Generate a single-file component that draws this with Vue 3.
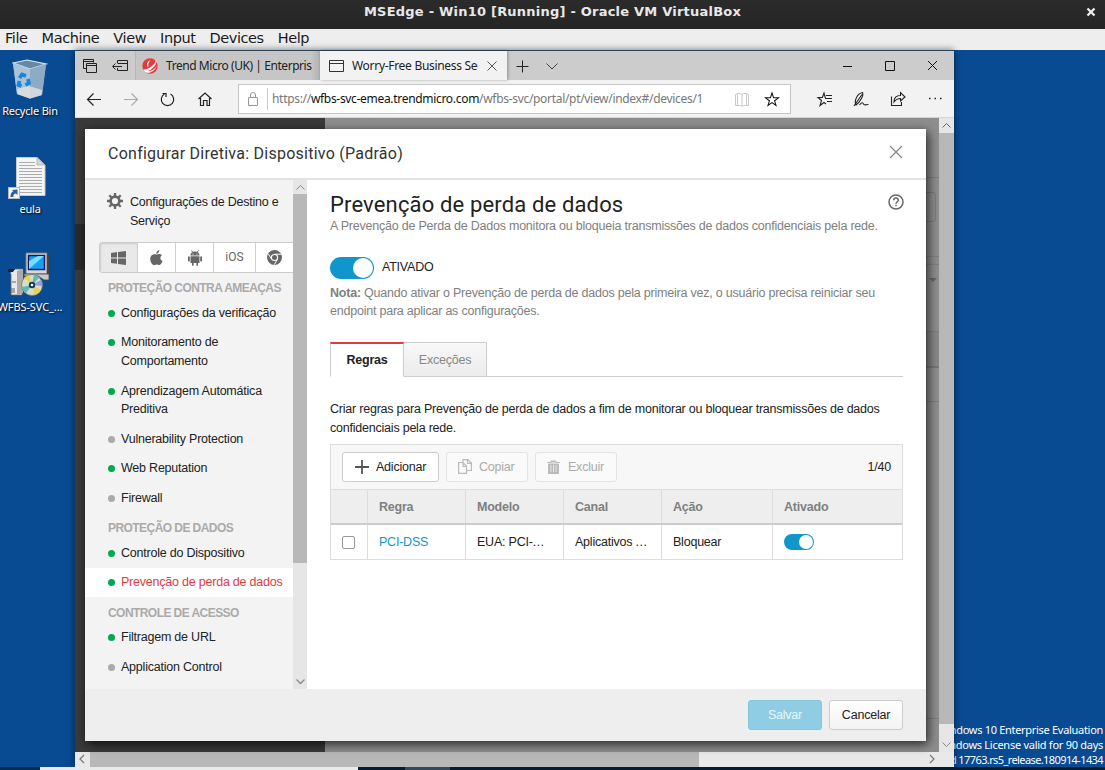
<script setup>
const menus = ['File', 'Machine', 'View', 'Input', 'Devices', 'Help']
const sections = [
  {
    title: 'PROTEÇÃO CONTRA AMEAÇAS',
    items: [
      { lines: ['Configurações da verificação'], on: true },
      { lines: ['Monitoramento de', 'Comportamento'], on: true },
      { lines: ['Aprendizagem Automática', 'Preditiva'], on: true },
      { lines: ['Vulnerability Protection'], on: false },
      { lines: ['Web Reputation'], on: true },
      { lines: ['Firewall'], on: false },
    ],
  },
  {
    title: 'PROTEÇÃO DE DADOS',
    items: [
      { lines: ['Controle do Dispositivo'], on: true },
      { lines: ['Prevenção de perda de dados'], on: true, active: true },
    ],
  },
  {
    title: 'CONTROLE DE ACESSO',
    items: [
      { lines: ['Filtragem de URL'], on: true },
      { lines: ['Application Control'], on: false },
    ],
  },
]
const heads = ['', 'Regra', 'Modelo', 'Canal', 'Ação', 'Ativado']
</script>

<template>
  <div class="vm">
    <header class="titlebar">
      <span class="vmtitle">MSEdge - Win10 [Running] - Oracle VM VirtualBox</span>
      <svg class="vmclose" width="10" height="10" viewBox="0 0 10 10"><path d="M1.500 1.500L8.500 8.500M8.500 1.500L1.500 8.500" stroke="#eee" stroke-width="2.300" /></svg>
    </header>
    <nav class="menubar">
      <span v-for="m in menus" :key="m">{{ m }}</span>
    </nav>

    <div class="desktop">
      <div class="shortcut bin">
        <svg width="36" height="40" viewBox="0 0 36 40">
          <path d="M1 4L15 1L34 5L30 36L18 39.500L5 35Z" fill="#9db9d2" />
          <path d="M1 4L15 1L34 5L18 10Z" fill="#6688a8" stroke="#dce7ef" stroke-width="1.200" />
          <path d="M1 4L18 10V39.500L5 35Z" fill="#a9c2d6" />
          <path d="M18 10L34 5L30 36L18 39.500Z" fill="#8faac4" />
          <path d="M5 30L17 27L30 31L29.500 36L18 39.500L5.500 35Z" fill="#dedfe0" opacity=".85" />
          <g fill="none" stroke="#1684e0" stroke-width="3.600"><path d="M7.500 19L10 15.500L14 17M16 20L17 24L13.500 26M9.500 27L6.500 26L7.500 22" /></g>
        </svg>
        <span class="lbl l1">Recycle Bin</span>
      </div>
      <div class="shortcut eula">
        <svg width="38" height="42" viewBox="0 0 38 42">
          <path d="M8.500 .5H29L37 8V38.500H8.500Z" fill="#f5f5f3" stroke="#c9c9c9" />
          <path d="M29 .5V8H37Z" fill="#d2d5d8" stroke="#a8a8a8" stroke-width=".7" />
          <path d="M11 5.500H27M11 8.500H27M11 11.500H34M11 14.500H34M11 17.500H34M11 20.500H34M11 23.500H34M11 26.500H34M11 29.500H34M11 32.500H34M11 35.500H34" stroke="#a9adb0" />
          <rect x=".5" y="30.500" width="11" height="11" fill="#f4f4f4" stroke="#b9b9b9" />
          <path d="M2.500 40C2.500 36.500 3.500 35 5.300 34.500L4 33L9.500 32.500L9.500 38L7.800 36.500C5.500 37 5 38 5.500 40Z" fill="#2c5fa8" />
        </svg>
        <span class="lbl l2">eula</span>
      </div>
      <div class="shortcut wfbs">
        <svg width="44" height="44" viewBox="0 0 44 44">
          <path d="M18 1H39V22H18Z" fill="#d8d8d6" stroke="#777" />
          <path d="M39 1L41 3V23H39Z" fill="#444" />
          <rect x="20.500" y="3.500" width="16" height="14" fill="#1b9df0" stroke="#101a6c" stroke-width="1.500" />
          <path d="M21 17V9L30 4H36Z" fill="#72e0fb" />
          <path d="M16 22H41V28H36L30 24H16Z" fill="#c9c9c6" stroke="#444" stroke-width=".8" />
          <path d="M2 21L7 17H15L14 43H3V22Z" fill="#e9e9e7" stroke="#666" stroke-width=".8" />
          <path d="M0 17H7L5 20H0Z" fill="#222" />
          <path d="M9 19L15 17V41L9 43Z" fill="#aaa" />
          <path d="M4 36V41M6 36V41M4 30H8" stroke="#666" />
          <circle cx="24" cy="33" r="10.500" fill="#dbdcc8" stroke="#777" stroke-width=".8" />
          <path d="M24 33L16 26A10.500 10.500 0 0 1 21 23ZM24 33L33 38A10.500 10.500 0 0 1 27 43Z" fill="#e6d44a" />
          <path d="M24 33L26 23A10.500 10.500 0 0 1 31 26ZM24 33L14 35A10.500 10.500 0 0 0 18 41Z" fill="#58bdb4" />
          <path d="M24 33L33 28A10 10 0 0 1 34 34Z" fill="#8e9fe0" />
          <circle cx="24" cy="33" r="3.200" fill="#16355e" /><circle cx="24" cy="33" r="1.300" fill="#fff" />
        </svg>
        <span class="lbl l3">WFBS-SVC_...</span>
      </div>

      <div class="watermark">
        <span class="w1">Windows 10 Enterprise Evaluation</span>
        <span class="w2">Windows License valid for 90 days</span>
        <span class="w3">Build 17763.rs5_release.180914-1434</span>
      </div>

      <section class="browser">
        <div class="tabs">
          <div class="tabtools">
            <svg width="60" height="29" viewBox="0 0 60 29" fill="none" stroke="#222">
              <path d="M8.500 17.500V8.500H18.500V11.500M8.500 10.500H18M11.500 12.500H21.500V21.500H11.500ZM11.500 14.500H21.500M8.500 17.500H11" />
              <path d="M42.500 12V9.500H52.500V19.500H42.500V17M42.500 12.500H52.500M38 15.500H47M40.500 12.500L37.500 15.500L40.500 18.500" />
            </svg>
          </div>
          <div class="tab idle">
            <svg width="16" height="16" viewBox="0 0 16 16"><circle cx="8" cy="8" r="7.700" fill="#e8383d" /><path d="M1.500 11.500C5 12 13 8 14 1.500C16 6 10 11.500 6 13C9 13.500 13 11 15 7.500C13 14 5 17 2 13Z" fill="#fff" /><path d="M8.500 2C5 3.500 4 7 6.500 9.500C5.800 7 6.500 4 8.500 2Z" fill="#fff" /></svg>
            <span class="t1">Trend Micro (UK) | Enterpris</span>
          </div>
          <div class="tab open">
            <svg width="15" height="12" viewBox="0 0 15 12" fill="none" stroke="#333"><path d="M.5.500H14.500V11.500H.5ZM.5 3.500H14.500" /></svg>
            <span class="t2">Worry-Free Business Sec</span>
            <svg class="tx" width="10" height="10" viewBox="0 0 10 10"><path d="M.5.500L9.500 9.500M9.500.500L.5 9.500" stroke="#555" /></svg>
          </div>
          <svg class="tabextra" width="52" height="29" viewBox="0 0 52 29" fill="none" stroke="#222"><path d="M9.500 15.500H21.500M15.500 9.500V21.500" /><path d="M39.500 12.500L45 18L50.500 12.500" stroke="#444" /></svg>
          <svg class="winctl" width="110" height="29" viewBox="0 0 110 29" fill="none" stroke="#111"><path d="M4 15.500H13" /><path d="M46.500 10.500H55.500V19.500H46.500Z" /><path d="M89 10L98 19M98 10L89 19" /></svg>
        </div>

        <div class="toolbar">
          <svg class="nav" width="163" height="38" viewBox="0 0 163 38" fill="none" stroke="#222" stroke-width="1.200">
            <path d="M13 19.500H26M18.500 13.500L12.500 19.500L18.500 25.500" />
            <path d="M49 19.500H62M56.500 13.500L62.500 19.500L56.500 25.500" stroke="#aaa" />
            <path d="M89.500 14A6.200 6.200 0 1 0 95.500 14M87.500 13.500H91V17" />
            <path d="M123.500 19L130 13L136.500 19M125.500 18V25.500H128.500V20.500H132V25.500H134.500V18" />
          </svg>
          <div class="address">
            <svg width="29" height="28" viewBox="0 0 29 28" fill="none" stroke="#999"><path d="M9.500 12.500H18.500V20.500H9.500ZM11.500 12V10A2.500 2.500 0 0 1 16.500 10V12" /><path d="M28.500 3V25" stroke="#ccc" /></svg>
            <span class="url">https://<b>wfbs-svc-emea.trendmicro.com</b>/wfbs-svc/portal/pt/view/index#/devices/1</span>
            <svg class="fav" width="50" height="28" viewBox="0 0 50 28" fill="none"><path d="M1.500 9.500L3.500 8.500H6.500L8 9.500L9.500 8.500H12.500L14.500 9.500V20.500H9.500L8 21.500L6.500 20.500H1.500ZM8 9.500V21M3.500 9V20M12.500 9V20" stroke="#c4c4c4" stroke-width=".9" /><path d="M38 8L39.600 12.800H44.500L40.600 15.800L42 20.500L38 17.600L34 20.500L35.400 15.800L31.500 12.800H36.400Z" stroke="#111" stroke-width="1.050" /></svg>
          </div>
          <svg class="acts" width="150" height="38" viewBox="0 0 150 38" fill="none" stroke="#222" stroke-width="1.100">
            <path d="M33.500 18.500H29.500L28 13L26.400 17.500H22L25.500 20.500L24 25.500L28 22.500L30 24M30 15.500H36M30 18.500H36M31 21.500H36" />
            <path d="M60 25C58 21 61 13.500 66.500 12.500C68 15.500 64 22 60 25ZM58 26L66 14.500M63.500 25C65.500 22 67 22.500 67.500 24C68.500 26 70.500 24 72.500 24.500" />
            <path d="M95.500 16.500V25.500H105.500V22M98 22C98 17 101 15.500 104.500 15.500V12.500L109 17L104.500 21V18.500C101 18.500 99.500 20 98 22Z" />
            <path d="M133 18.500H134.500M138.500 18.500H140M144 18.500H145.500" stroke-width="1.600" />
          </svg>
        </div>

        <div class="page">
          <div class="darkcol"><i></i></div>
          <div class="greycol">
            <span class="ln a"></span><span class="bx"></span><span class="ln b"></span><span class="ln c"></span><span class="caret"></span><span class="ln d"></span><span class="band"></span><span class="ln e"></span><span class="ln g"></span><span class="ln f"></span>
          </div>
          <div class="vscroll"><i class="cap"><svg width="15" height="15" viewBox="0 0 15 15"><path d="M3.500 9.500L7.500 5.500L11.500 9.500" fill="none" stroke="#666" /></svg></i><i class="vthumb"></i><i class="vend"><svg width="15" height="15" viewBox="0 0 15 15"><path d="M3.500 5.500L7.500 9.500L11.500 5.500" fill="none" stroke="#888" /></svg></i></div>

          <div class="modal">
            <div class="mhead">
              <span class="mtitle">Configurar Diretiva: Dispositivo (Padrão)</span>
              <svg width="14" height="14" viewBox="0 0 14 14"><path d="M1 1L13 13M13 1L1 13" stroke="#888" stroke-width="1.200" /></svg>
            </div>
            <div class="mbody">
              <aside class="side">
                <div class="cfg">
                  <svg width="16" height="16" viewBox="0 0 16 16"><circle cx="8" cy="8" r="4.400" fill="none" stroke="#666" stroke-width="2.600" /><path d="M8 0V3M8 13V16M0 8H3M13 8H16M2.300 2.300L4.500 4.500M11.500 11.500L13.700 13.700M13.700 2.300L11.500 4.500M4.500 11.500L2.300 13.700" stroke="#666" stroke-width="2.300" /></svg>
                  <div><div>Configurações de Destino e</div><div>Serviço</div></div>
                </div>
                <div class="osrow">
                  <span class="sel"><svg width="15" height="14" viewBox="0 0 15 14" fill="#666"><path d="M0 2L6 1.100V6.500H0ZM7 1L15 0V6.500H7ZM0 7.500H6V12.800L0 12ZM7 7.500H15V14L7 13Z" /></svg></span>
                  <span><svg width="13" height="16" viewBox="0 0 13 16" fill="#666"><path d="M6.500 4.600C8 4 10.500 3.200 12 5.300C9.500 7 10 10 12.600 11.100C11.500 14 10 15.500 8.500 15C7 14.300 6 14.400 4.800 15C2.500 16 0 11.500 .2 8.500C.5 5 3.500 3.500 6.500 4.600ZM6.300 3.900C6.200 2 7.600 .4 9.300 0C9.500 2 8 3.800 6.300 3.900Z" /></svg></span>
                  <span><svg width="14" height="16" viewBox="0 0 14 16" fill="#666"><path d="M2.500 5.500C2.500 2.500 4.500 1.500 7 1.500S11.500 2.500 11.500 5.500ZM2.500 6.200H11.500V13H10V15.300Q9.200 16.500 8.400 15.300V13H5.600V15.300Q4.800 16.500 4 15.300V13H2.500ZM0 6.800Q.9 5.600 1.800 6.800V11Q.9 12 0 11ZM12.200 6.800Q13.100 5.600 14 6.800V11Q13.100 12 12.200 11Z" /><path d="M3.500 .5L4.800 2.300M10.500 .5L9.200 2.300" stroke="#666" /><circle cx="5" cy="4" r=".6" fill="#fff" /><circle cx="9" cy="4" r=".6" fill="#fff" /></svg></span>
                  <span class="ios">iOS</span>
                  <span><svg width="15" height="15" viewBox="0 0 15 15"><circle cx="7.500" cy="7.500" r="7.500" fill="#666" /><circle cx="7.500" cy="7.500" r="3.600" fill="#fff" /><circle cx="7.500" cy="7.500" r="2.500" fill="#666" /><path d="M7.500 4.200H14.200M4.500 9.200L1.300 3.800M10.500 9.200L7.200 14.800" stroke="#fff" /></svg></span>
                </div>
                <template v-for="s in sections" :key="s.title">
                  <div class="sec">{{ s.title }}</div>
                  <div v-for="it in s.items" :key="it.lines[0]" class="item" :class="{ active: it.active }">
                    <i :class="{ on: it.on }"></i>
                    <div><div v-for="l in it.lines" :key="l">{{ l }}</div></div>
                  </div>
                </template>
              </aside>
              <div class="sscroll"><i class="cap"><svg width="14" height="14" viewBox="0 0 14 14"><path d="M3.500 9.500L7.500 5.500L11.500 9.500" fill="none" stroke="#888" /></svg></i><i class="sthumb"></i><i class="send"><svg width="14" height="14" viewBox="0 0 14 14"><path d="M3.500 4.500L7.500 8.500L11.500 4.500" fill="none" stroke="#888" stroke-width="1.300" /></svg></i></div>

              <main class="main">
                <div class="h1row">
                  <h1>Prevenção de perda de dados</h1>
                  <svg class="help" width="16" height="16" viewBox="0 0 16 16" fill="none" stroke="#666"><circle cx="8" cy="8" r="7" stroke-width="1.500" /><path d="M5.700 6.300C5.700 3.400 10.300 3.400 10.300 6.200C10.300 7.800 8 7.800 8 9.800M8 10.700V12.300" stroke-width="1.500" /></svg>
                </div>
                <p class="grey sub">A Prevenção de Perda de Dados monitora ou bloqueia transmissões de dados confidenciais pela rede.</p>
                <div class="toggle"><i class="sw"></i><span>ATIVADO</span></div>
                <p class="grey n1"><b>Nota:</b> Quando ativar o Prevenção de perda de dados pela primeira vez, o usuário precisa reiniciar seu</p>
                <p class="grey n2">endpoint para aplicar as configurações.</p>
                <div class="ptabs"><span class="pt cur">Regras</span><span class="pt oth">Exceções</span></div>
                <p class="d1">Criar regras para Prevenção de perda de dados a fim de monitorar ou bloquear transmissões de dados</p>
                <p class="d2">confidenciais pela rede.</p>
                <div class="table">
                  <div class="tbar">
                    <span class="btn add"><svg width="14" height="14" viewBox="0 0 14 14"><path d="M0 7H14M7 0V14" stroke="#555" stroke-width="1.800" /></svg><em>Adicionar</em></span>
                    <span class="btn off cp"><svg width="14" height="15" viewBox="0 0 14 15" fill="none" stroke="#bbb" stroke-width="1.200"><path d="M5 3.500V.6H10L13.400 4V11.500H9M9.500 .6V4.400H13M.6 3.500H5L8.500 7V14.400H.6ZM5 3.500V7.500H8.500" /></svg><em>Copiar</em></span>
                    <span class="btn off ex"><svg width="13" height="14" viewBox="0 0 13 14"><path d="M0 2.500H4V1H9V2.500H13M1.500 4H11.500V13.500H1.500Z" fill="#bbb" stroke="#bbb" /><path d="M4 5V12M6.500 5V12M9 5V12" stroke="#e5e5e5" /></svg><em class="xl">Excluir</em></span>
                    <span class="count">1/40</span>
                  </div>
                  <div class="row thead"><span v-for="h in heads" :key="h">{{ h }}</span></div>
                  <div class="row tr">
                    <span><i class="chk"></i></span><span class="link">PCI-DSS</span><span>EUA: PCI-<em class="dots">...</em></span><span class="app">Aplicativos&nbsp;<em class="dots">...</em></span><span>Bloquear</span><span><i class="sw small"></i></span>
                  </div>
                </div>
              </main>
            </div>
            <footer class="mfoot"><span class="fb save">Salvar</span><span class="fb cancel">Cancelar</span></footer>
          </div>
        </div>

        <div class="hscroll"><i class="hl"><svg width="15" height="14" viewBox="0 0 15 14"><path d="M9 3L5 7L9 11" fill="none" stroke="#777" stroke-width="1.200" /></svg></i><i class="hthumb"></i><i class="hr"><svg width="15" height="14" viewBox="0 0 15 14"><path d="M6 3L10 7L6 11" fill="none" stroke="#777" stroke-width="1.200" /></svg></i></div>
      </section>
      <div class="taskbar"><i class="tk0"></i><i class="tk1"></i><i class="tk2"></i><i class="tk3"></i></div>
    </div>
  </div>
</template>

<style>
body { margin: 0; overflow: hidden; }
</style>
<style scoped>
* { box-sizing: border-box; }
svg { display: block; flex: none; }
p, h1 { margin: 0; font-weight: 400; white-space: nowrap; }
em { font-style: normal; }
span { white-space: nowrap; }
.vm { width: 1105px; height: 770px; display: flex; flex-direction: column; overflow: hidden; }
.titlebar { height: 29px; background: linear-gradient(#2b2b2b, #252525); color: #e8e8e8; display: flex; align-items: flex-start; justify-content: center; position: relative; font: bold 13px/23px "DejaVu Sans", sans-serif; letter-spacing: .22px; }
.vmclose { position: absolute; right: 9px; top: 7px; }
.menubar { height: 21px; background: #eee; display: flex; gap: 14px; padding-left: 5px; font: 14.500px/19px "DejaVu Sans", sans-serif; color: #1a1a1a; letter-spacing: -.42px; }
.desktop { height: 720px; position: relative; background: #094b93; }
.shortcut { position: absolute; width: 60px; display: flex; flex-direction: column; align-items: center; }
.lbl { color: #fff; font: 11px/14px "Noto Sans", sans-serif; text-shadow: 1px 1px 2px #000; letter-spacing: -.2px; }
.bin { left: 0; top: 9px; }
.l1 { margin-top: 5px; }
.eula { left: 0; top: 107px; }
.eula svg { margin-left: -6px; }
.l2 { margin-top: 3px; }
.wfbs { left: 0; top: 202px; }
.l3 { margin-top: 4px; letter-spacing: -.1px; }
.watermark { position: absolute; right: 2px; top: 672px; display: flex; flex-direction: column; align-items: flex-end; color: #fff; font: 11px/15px "Noto Sans", sans-serif; }
.w1 { letter-spacing: -.3px; } .w2 { letter-spacing: -.27px; } .w3 { letter-spacing: -.6px; }
.browser { position: absolute; left: 75px; top: 0; width: 879px; height: 717px; background: #f2f2f2; box-shadow: 0 0 7px rgba(0,0,0,.55); display: flex; flex-direction: column; border-top: 1px solid #2b4257; }
.tabs { height: 29px; background: #ccc; display: flex; align-items: center; position: relative; font: 12px/29px "Noto Sans", sans-serif; color: #222; }
.tabtools { width: 61px; height: 29px; border-right: 1px solid #b5b5b5; }
.tab { height: 29px; display: flex; align-items: center; }
.idle { width: 184px; padding-left: 6px; background: linear-gradient(90deg, #c6c6c6 95%, #b2b2b2); }
.t1 { margin-left: 8px; letter-spacing: -.44px; }
.open { width: 187px; background: #f2f2f2; padding-left: 9px; box-shadow: 1px 0 3px rgba(0,0,0,.3); }
.t2 { margin-left: 8px; width: 126px; overflow: hidden; letter-spacing: -.3px; }
.tx { margin-left: 9px; }
.winctl { margin-left: auto; margin-right: 5px; }
.toolbar { height: 38px; background: #f2f2f2; display: flex; align-items: center; border-bottom: 1px solid #d6d6d6; }
.address { width: 553px; height: 30px; border: 1px solid #c6c6c6; background: #fff; display: flex; align-items: center; font: 12px/29px "Noto Sans", sans-serif; color: #777; }
.url { margin-left: 4px; letter-spacing: -.31px; }
.url b { font-weight: 400; color: #111; }
.fav { margin-left: auto; margin-right: 6px; }
.acts { margin-left: 5px; }
.page { height: 634px; display: flex; position: relative; background: #8e8e8e; }
.darkcol { width: 250px; background: #3a3a3a; padding-top: 106px; }
.darkcol i { display: block; height: 46px; background: #2b2b2b; }
.greycol { width: 614px; position: relative; background: #8e8e8e; overflow: hidden; }
.ln { position: absolute; right: 0; width: 300px; height: 1px; background: #7f7f7f; }
.a { top: 59px; } .b { top: 138px; } .c { top: 146px; } .d { top: 213px; } .e { top: 248px; height: 2px; background: #777; } .g { top: 283px; } .f { top: 600px; }
.bx { position: absolute; right: 3px; top: 74px; width: 60px; height: 30px; border: 1px solid #7c7c7c; border-radius: 3px; }
.caret { position: absolute; right: 2px; top: 160px; border: 4px solid transparent; border-top-color: #666; border-bottom: 0; }
.band { position: absolute; right: 0; top: 214px; width: 60px; height: 34px; background: #888; }
.vscroll { width: 15px; background: #b8b8b8; display: flex; flex-direction: column; }
.cap { display: block; height: 15px; background: #e6e6e6; }
.vthumb { flex: 1; }
.vend { height: 28px; background: #e6e6e6; padding-top: 13px; }
.modal { position: absolute; left: 10px; top: 11px; width: 841px; height: 612px; background: #fff; box-shadow: 2px 3px 10px rgba(0,0,0,.75); display: flex; flex-direction: column; font: 12.500px/18.570px "Liberation Sans", Arial, sans-serif; letter-spacing: -.22px; color: #222; }
.mhead { height: 51px; border-bottom: 2px solid #e3e3e3; display: flex; justify-content: space-between; padding: 16px 23px 0; }
.mtitle { font: 16px/18px Roboto, sans-serif; color: #333; letter-spacing: .25px; }
.mbody { height: 509px; display: flex; }
.side { width: 208px; background: #f3f3f3; overflow: hidden; }
.cfg { display: flex; height: 62px; padding: 13.400px 0 0 22px; gap: 7px; white-space: nowrap; }
.osrow { margin-left: 14px; height: 31px; width: 198px; display: flex; background: #fff; border: 1px solid #ccc; border-radius: 3px; }
.osrow span { width: 38px; display: flex; align-items: center; justify-content: center; border-right: 1px solid #d0d0d0; }
.osrow .sel { background: #e9e9e9; box-shadow: inset 1px 1px 2px rgba(0,0,0,.12); }
.osrow .ios { width: 42px; font-size: 12px; font-family: Roboto, sans-serif; color: #666; letter-spacing: 0; }
.sec { padding: 6.100px 0 .5px 23px; height: 25.400px; font-weight: 700; font-size: 12px; letter-spacing: -.56px; color: #aaa; white-space: nowrap; }
.item { display: flex; padding: 5.500px 0 5.500px 23px; gap: 6px; white-space: nowrap; }
.item i { width: 7px; height: 7px; border-radius: 50%; background: #aaa; margin-top: 6px; flex: none; }
.item i.on { background: #00a94f; }
.active { background: #fff; color: #db3d44; }
.sscroll { width: 14px; background: #e6e6e6; display: flex; flex-direction: column; }
.sscroll .cap { height: 14px; }
.sthumb { height: 369px; background: #b8b8b8; }
.send { margin-top: auto; height: 14px; }
.main { padding: 0 23px; width: 619px; }
.h1row { display: flex; justify-content: space-between; height: 37px; padding-top: 14px; }
.help { margin-right: -1px; }
h1 { font: 22px/22px Roboto, sans-serif; color: #222; letter-spacing: .15px; }
.grey { color: #808080; }
.toggle { display: flex; height: 22px; margin: 21px 0 5.300px; line-height: 20px; gap: 8px; }
.sw { display: block; width: 44px; height: 22px; border-radius: 11px; background: #1196cc; position: relative; }
.sw::after { content: ""; position: absolute; right: 1px; top: 1px; width: 20px; height: 20px; border-radius: 50%; background: #fff; }
.small { width: 30px; height: 16px; border-radius: 8px; }
.small::after { width: 14px; height: 14px; }
.ptabs { display: flex; height: 35px; margin: 20.700px 0 23.400px; border-bottom: 1px solid #ccc; }
.pt { height: 35px; line-height: 34px; border: 1px solid #ccc; text-align: center; }
.cur { width: 74px; border-top: 2px solid #db3d44; border-bottom-color: #fff; background: #fff; font-weight: 700; line-height: 32px; }
.oth { width: 83px; border-left: 0; background: linear-gradient(#f8f8f8, #ececec); color: #888; }
.table { margin-top: 6.600px; width: 573px; border: 1px solid #ddd; }
.tbar { height: 45px; background: #f7f7f7; display: flex; align-items: center; padding: 0 11px; gap: 7px; border-bottom: 1px solid #ddd; }
.btn { height: 30px; border: 1px solid #ccc; border-radius: 3px; background: #fff; display: flex; align-items: center; padding-left: 12px; gap: 7px; }
.btn em { padding-top: 1px; }
.add { width: 97px; } .cp { width: 82px; } .ex { width: 82px; }
.btn .xl { margin-left: 1px; }
.off { color: #aaa; border-color: #e3e3e3; background: #fafafa; padding-left: 11px; }
.count { margin-left: auto; padding-top: 1px; }
.row { display: grid; grid-template-columns: 37px 98px 98px 98px 111px 129px; height: 34px; }
.row span { border-right: 1px solid #ddd; padding: 1px 0 0 11px; display: flex; align-items: center; }
.row span:last-child { border-right: 0; }
.thead { background: #eee; color: #808080; font-weight: 700; height: 35px; border-bottom: 2px solid #ccc; }
.row .link { color: #1196cc; }
.dots { letter-spacing: .5px; }
.chk { width: 13px; height: 13px; border: 1px solid #999; border-radius: 2px; }
.mfoot { height: 52px; background: #eee; display: flex; justify-content: flex-end; padding: 11px 23px 0 0; gap: 7px; }
.fb { width: 74px; height: 30px; border-radius: 3px; line-height: 29px; text-align: center; border: 1px solid #ccc; background: linear-gradient(#fff, #f3f3f3); }
.save { background: #8fcde5; border-color: #86c5de; color: #eaf6fb; }
.hscroll { height: 15px; background: #e9e9e9; display: flex; }
.hl { width: 15px; } .hthumb { width: 609px; background: #b8b8b8; } .hr { margin-left: auto; margin-right: 15px; }
.taskbar { position: absolute; left: 0; right: 0; top: 717px; height: 3px; display: flex; background: #071c30; }
.tk0 { width: 40px; background: #0a2b50; } .tk1 { width: 318px; background: #e9eaea; } .tk2 { width: 47px; } .tk3 { width: 45px; background: #34495c; }
</style>
